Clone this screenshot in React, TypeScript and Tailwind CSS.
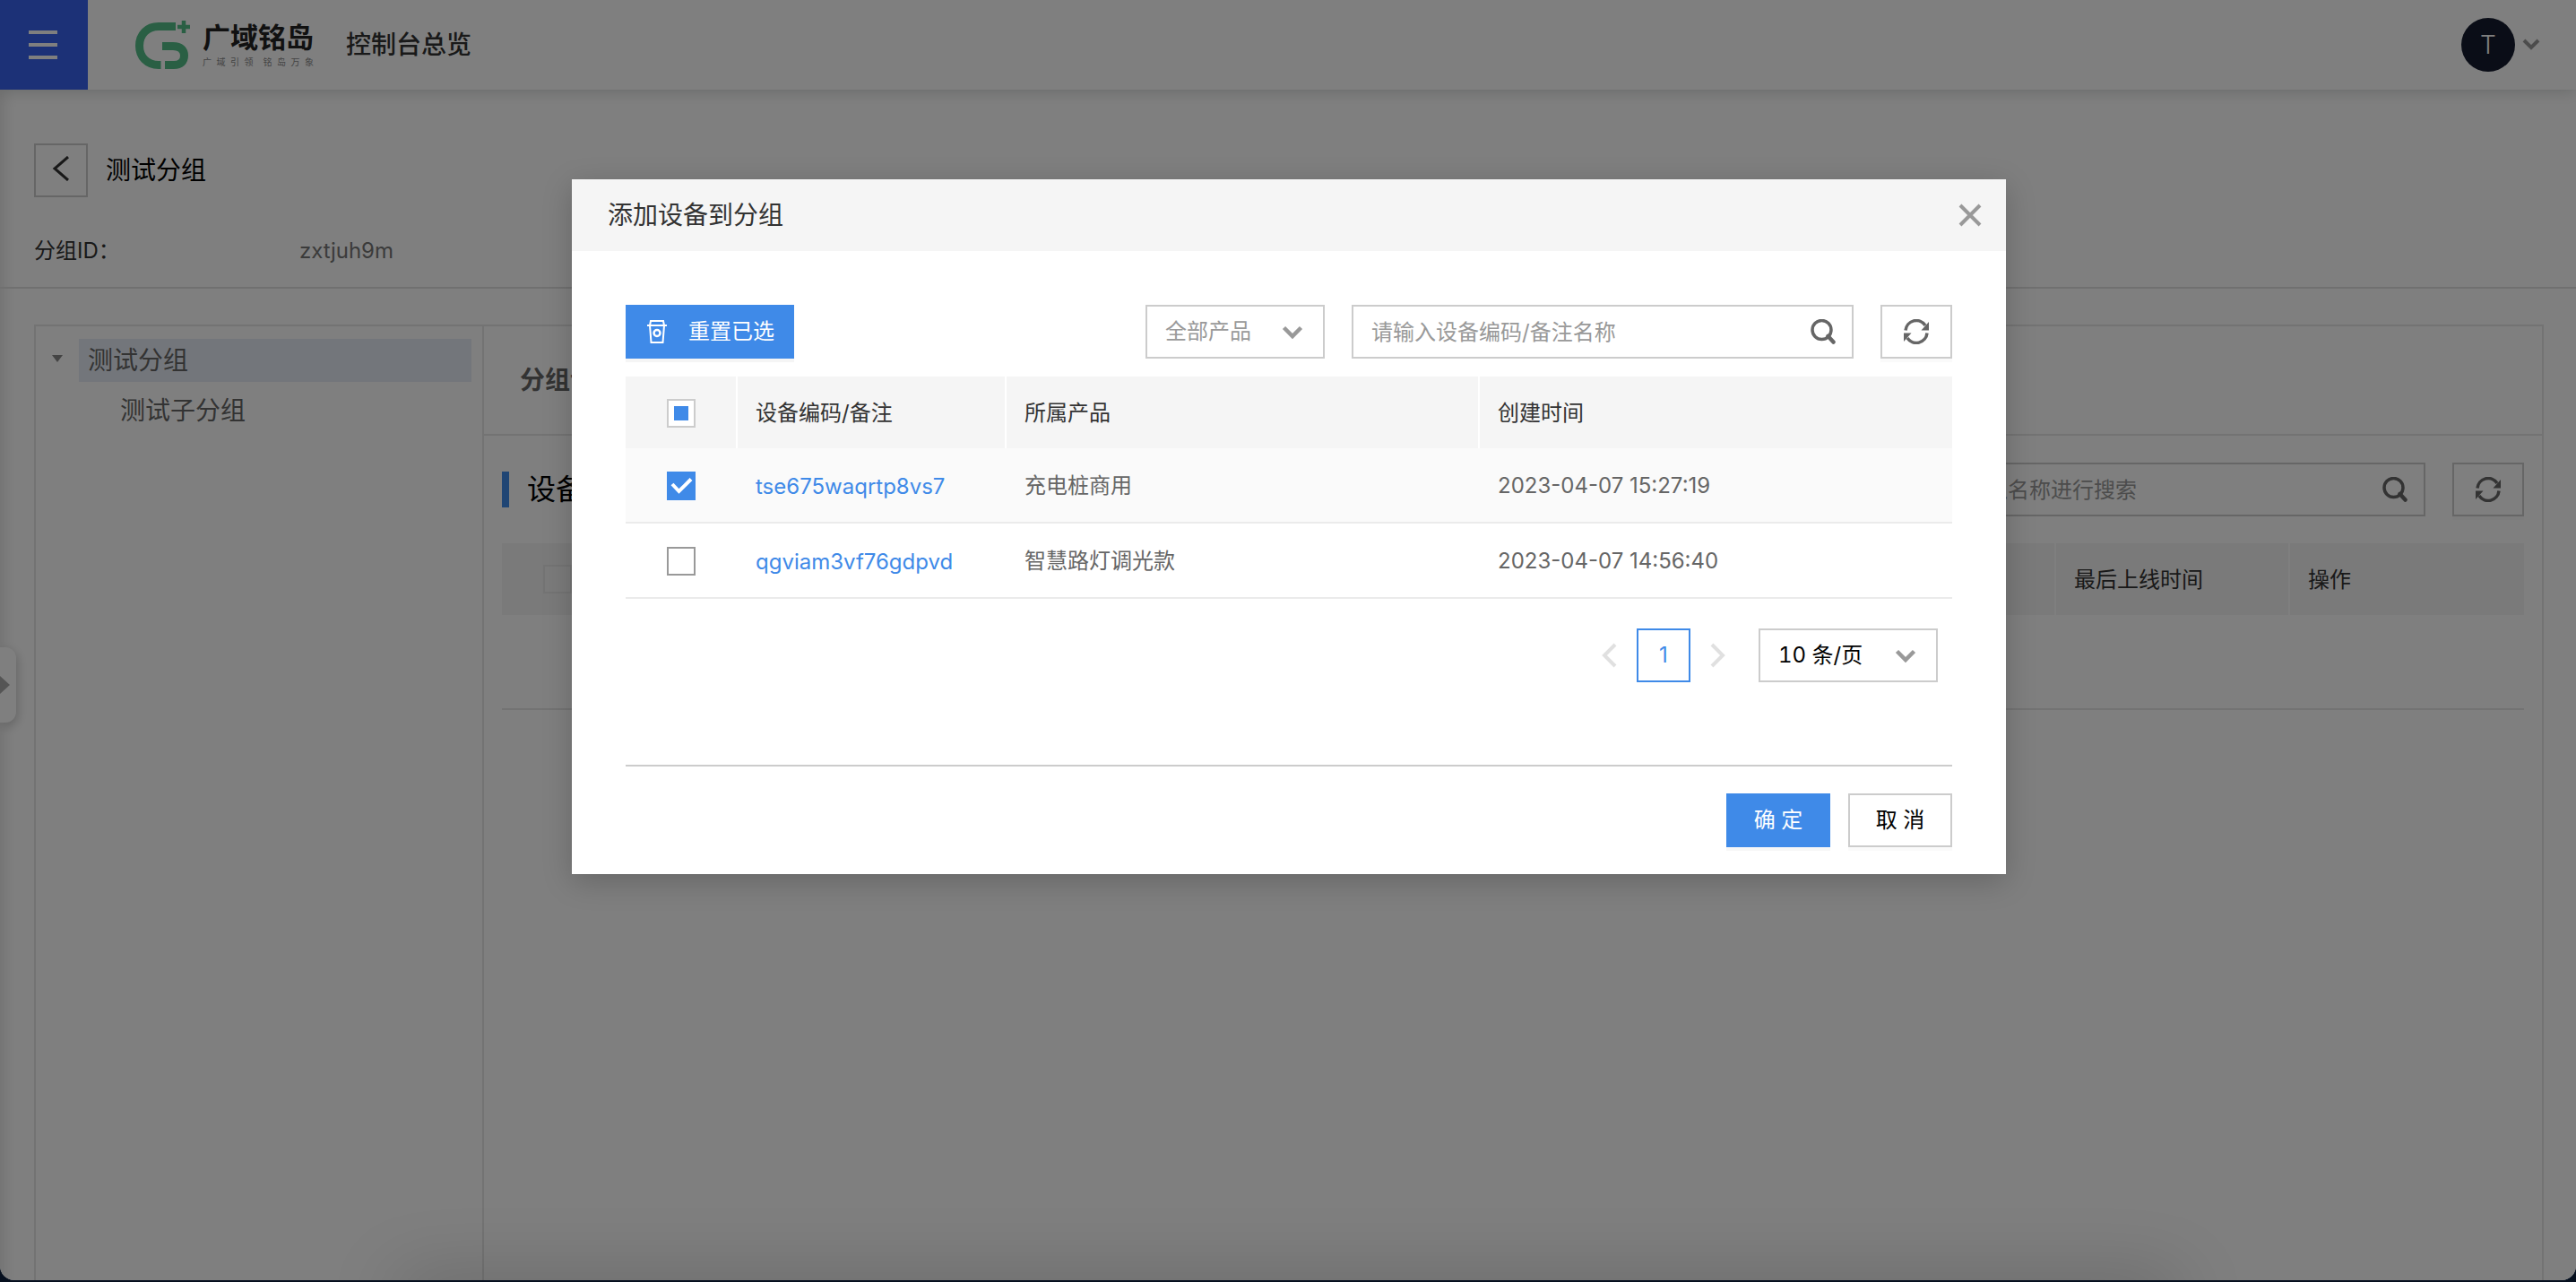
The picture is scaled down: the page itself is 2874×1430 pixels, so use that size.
import { useEffect, useRef, useState, type ReactNode } from "react";
import { clsx } from "clsx";

interface Device {
  id: string;
  product: string;
  createdAt: string;
}

const DEVICES: Device[] = [
  { id: "tse675waqrtp8vs7", product: "充电桩商用", createdAt: "2023-04-07 15:27:19" },
  { id: "qgviam3vf76gdpvd", product: "智慧路灯调光款", createdAt: "2023-04-07 14:56:40" },
];

function Logo() {
  return (
    <svg width="61" height="54" viewBox="0 0 61 54" fill="none" stroke="#55bf89" aria-hidden="true">
      <path d="M45 6.5H26C13 6.5 4.5 15.500 4.500 28S13 49.500 26 49.500h2.500" strokeWidth="9" />
      <path d="M30 28.500h12c8.500 0 12.500 4 12.500 10.500S50.500 49.500 43 49.500H33" strokeWidth="9" />
      <path d="M54 0v14M47 7h14" strokeWidth="4.500" />
    </svg>
  );
}

function SearchIcon() {
  return (
    <svg width="28" height="28" viewBox="0 0 28 28" fill="none" stroke="#666" aria-hidden="true">
      <circle cx="12.500" cy="12" r="10.500" strokeWidth="3.500" />
      <path d="m19.500 19 6 6.500" strokeWidth="4.500" strokeLinecap="round" />
    </svg>
  );
}

function RefreshIcon() {
  return (
    <svg width="28" height="28" viewBox="0 0 28 28" fill="none" aria-hidden="true">
      <path d="M2 12.500A12 12 0 0 1 24 7M26 15.500A12 12 0 0 1 4 21" stroke="#666" strokeWidth="3.500" />
      <path d="M28 3v9.500h-8.500zM0 25v-9.500h8.500z" fill="#666" />
    </svg>
  );
}

function ChevronDown({ className }: { className?: string }) {
  return (
    <svg width="24" height="16" viewBox="0 0 24 16" fill="none" stroke="#999" strokeWidth="4.500" className={className} aria-hidden="true">
      <path d="m2.500 2.500 9.500 9.500 9.500-9.500" />
    </svg>
  );
}

function ResetIcon() {
  return (
    <svg width="22" height="28" viewBox="0 0 22 28" fill="none" stroke="#fff" strokeWidth="2" aria-hidden="true">
      <path d="M0 7h22M3 7l1-5h14l1 5M3 7l1.500 19h13L19 7" />
      <circle cx="11" cy="15.500" r="3.500" strokeWidth="2.500" />
    </svg>
  );
}

function SearchBox({ label }: { label: string }) {
  return (
    <div className="flex h-[60px] w-[560px] items-center border-2 border-[#ccc] bg-white pr-[18px] pl-5">
      <input
        type="text"
        aria-label={label}
        placeholder={label}
        className="h-full min-w-0 flex-1 bg-transparent outline-none placeholder:text-[#999]"
      />
      <button type="button" aria-label="搜索">
        <SearchIcon />
      </button>
    </div>
  );
}

function RefreshButton() {
  return (
    <button
      type="button"
      aria-label="刷新"
      className="flex h-[60px] w-20 items-center justify-center border-2 border-[#ccc] bg-white shadow-[0_4px_0_rgba(0,0,0,0.02)]"
    >
      <RefreshIcon />
    </button>
  );
}

function SelectBox({ label, className, children }: { label: string; className: string; children: ReactNode }) {
  return (
    <div className="relative h-[60px] w-[200px]">
      <select
        aria-label={label}
        className={clsx("h-full w-full appearance-none border-2 border-[#ccc] bg-white px-5 tabular-nums outline-none", className)}
      >
        {children}
      </select>
      <ChevronDown className="pointer-events-none absolute top-[23px] right-6" />
    </div>
  );
}

interface CheckboxProps {
  label: string;
  checked: boolean;
  indeterminate?: boolean;
  muted?: boolean;
  onChange: () => void;
}

function Checkbox({ label, checked, indeterminate = false, muted = false, onChange }: CheckboxProps) {
  const ref = useRef<HTMLInputElement>(null);

  useEffect(() => {
    if (ref.current) ref.current.indeterminate = indeterminate;
  }, [indeterminate]);

  return (
    <span className="relative inline-block size-8 align-middle">
      <input
        ref={ref}
        type="checkbox"
        aria-label={label}
        checked={checked}
        onChange={onChange}
        className={clsx(
          "block size-8 appearance-none border-2",
          checked ? "border-[#3f8ae8] bg-[#3f8ae8]" : "bg-white",
          !checked && (indeterminate || muted ? "border-[#ccc]" : "border-[#999]"),
        )}
      />
      {indeterminate && <span className="pointer-events-none absolute inset-2 bg-[#3f8ae8]" />}
      {checked && (
        <svg viewBox="0 0 32 32" fill="none" stroke="#fff" strokeWidth="4" className="pointer-events-none absolute inset-0">
          <path d="m6 14 7.500 8L27 8.500" />
        </svg>
      )}
    </span>
  );
}

function TopBar() {
  return (
    <header className="relative z-10 flex h-[100px] items-center bg-white shadow-[0_2px_16px_rgba(0,30,20,0.18)]">
      <button type="button" aria-label="菜单" className="flex h-full w-[98px] flex-col justify-center gap-2.5 bg-[#3863ee] pl-8">
        <span className="h-1 w-8 bg-white" />
        <span className="h-1 w-8 bg-white" />
        <span className="h-1 w-8 bg-white" />
      </button>
      <div className="ml-[53px] flex items-center gap-3.5">
        <Logo />
        <div className="w-[126px]">
          <div className="text-[31px] leading-[38px] font-bold text-[#222]">广域铭岛</div>
          <div className="flex w-[124px] justify-between text-[10px] leading-4 text-[#888]">
            {Array.from("广域引领").map((c) => (
              <span key={c}>{c}</span>
            ))}
            <span />
            {Array.from("铭岛万象").map((c) => (
              <span key={c}>{c}</span>
            ))}
          </div>
        </div>
      </div>
      <a href="#" className="ml-[34px] text-[28px] leading-10 font-medium text-[#333]">
        控制台总览
      </a>
      <button type="button" aria-label="账户" className="mr-10 ml-auto flex items-center gap-2">
        <span className="flex size-[60px] items-center justify-center rounded-full bg-[#141b2e] text-[28px] font-light text-white">
          T
        </span>
        <svg width="20" height="14" viewBox="0 0 20 14" fill="none" stroke="#999" strokeWidth="4" aria-hidden="true">
          <path d="m2 2 8 8 8-8" />
        </svg>
      </button>
    </header>
  );
}

function GroupTree() {
  return (
    <aside className="w-[500px] shrink-0 border-r-2 border-[#e6e6e6] pt-3.5 pr-3 pl-[18px] text-[28px] leading-[48px] text-[#666]">
      <ul>
        <li>
          <div className="flex items-center gap-[18px]">
            <svg width="12" height="8" viewBox="0 0 12 8" fill="#888" className="mb-1" aria-hidden="true">
              <path d="M0 0h12L6 8z" />
            </svg>
            <div className="h-12 flex-1 bg-[#e6edf6] pl-2.5">测试分组</div>
          </div>
          <ul className="mt-2 pl-[76px]">
            <li>测试子分组</li>
          </ul>
        </li>
      </ul>
    </aside>
  );
}

function DevicePanel() {
  return (
    <section className="min-w-0 flex-1">
      <h2 className="h-[122px] border-b-2 border-[#e6e6e6] pl-10 text-[28px] leading-[120px] font-bold text-[#666]">
        分组设备
      </h2>
      <div className="px-5 pt-[30px]">
        <div className="flex items-center gap-[30px]">
          <h3 className="mr-auto flex items-center gap-5 text-[32px] leading-10 text-black">
            <span className="h-10 w-2 bg-[#3f8ae8]" />
            设备列表
          </h3>
          <SearchBox label="请输入名称进行搜索" />
          <RefreshButton />
        </div>
        <table className="mt-[30px] w-full table-fixed border-separate border-spacing-0 text-left">
          <thead>
            <tr className="h-20 bg-[#f4f4f4] text-[#333]">
              <th className="w-[126px] border-r-2 border-white pl-[46px]">
                <input
                  type="checkbox"
                  aria-label="全选设备"
                  disabled
                  className="block size-8 appearance-none border-2 border-[#e9e9e9] bg-[#f7f7f7]"
                />
              </th>
              <th className="border-r-2 border-white pt-0.5 pl-5 font-normal">设备编码</th>
              <th className="w-[261px] border-r-2 border-white pt-0.5 pl-5 font-normal">最后上线时间</th>
              <th className="w-[261px] pt-0.5 pl-5 font-normal">操作</th>
            </tr>
          </thead>
          <tbody>
            <tr className="h-[106px]">
              <td colSpan={4} className="border-b-2 border-[#e6e6e6]" />
            </tr>
          </tbody>
        </table>
      </div>
    </section>
  );
}

function AddDeviceDialog() {
  const [selected, setSelected] = useState<string[]>([DEVICES[0].id]);
  const all = selected.length === DEVICES.length;

  function toggle(id: string) {
    setSelected((prev) => (prev.includes(id) ? prev.filter((x) => x !== id) : [...prev, id]));
  }

  return (
    <div
      role="dialog"
      aria-modal="true"
      aria-labelledby="dialog-title"
      className="w-[1600px] max-w-full bg-white shadow-[0_8px_32px_rgba(0,0,0,0.2)]"
    >
      <div className="flex h-20 items-center justify-between bg-[#f5f5f5] pr-6 pl-10">
        <h1 id="dialog-title" className="text-[28px] leading-10 text-[#333]">
          添加设备到分组
        </h1>
        <button type="button" aria-label="关闭">
          <svg width="30" height="30" viewBox="0 0 30 30" fill="none" stroke="#999" strokeWidth="4" aria-hidden="true">
            <path d="m3 4 22 22M25 4 3 26" />
          </svg>
        </button>
      </div>

      <div className="p-[60px] pb-[30px]">
        <div className="flex gap-[30px]">
          <button
            type="button"
            onClick={() => setSelected([])}
            className="mr-auto flex h-[60px] items-center gap-6 bg-[#3f8ae8] pr-[22px] pl-6 text-white shadow-[0_4px_0_rgba(0,0,0,0.04)]"
          >
            <ResetIcon />
            重置已选
          </button>
          <SelectBox label="产品" className="text-[#999]">
            <option>全部产品</option>
          </SelectBox>
          <SearchBox label="请输入设备编码/备注名称" />
          <RefreshButton />
        </div>

        <table className="mt-5 w-full table-fixed border-separate border-spacing-0 text-left">
          <thead>
            <tr className="h-20 bg-[#f5f5f5] text-[#333]">
              <th className="w-[125px] border-r-2 border-white pl-[46px]">
                <Checkbox
                  label="全选"
                  checked={all}
                  indeterminate={selected.length > 0 && !all}
                  muted
                  onChange={() => setSelected(all ? [] : DEVICES.map((d) => d.id))}
                />
              </th>
              <th className="w-[300px] border-r-2 border-white pt-0.5 pl-5 font-normal">设备编码/备注</th>
              <th className="w-[528px] border-r-2 border-white pt-0.5 pl-5 font-normal">所属产品</th>
              <th className="pt-0.5 pl-5 font-normal">创建时间</th>
            </tr>
          </thead>
          <tbody className="text-[#666]">
            {DEVICES.map((d) => {
              const checked = selected.includes(d.id);
              return (
                <tr key={d.id} className={clsx("h-[84px] *:border-b-2 *:border-[#ebebeb]", checked && "bg-[#fafafa]")}>
                  <td className="pl-[46px]">
                    <Checkbox label={d.id} checked={checked} onChange={() => toggle(d.id)} />
                  </td>
                  <td className="pt-1 pl-5">
                    <a href="#" className="text-[#3f8ae8]">
                      {d.id}
                    </a>
                  </td>
                  <td className="pt-0.5 pl-5">{d.product}</td>
                  <td className="pt-0.5 pl-5">{d.createdAt}</td>
                </tr>
              );
            })}
          </tbody>
        </table>

        <nav aria-label="分页" className="mt-[33px] mr-4 flex items-center justify-end">
          <button type="button" aria-label="上一页" disabled>
            <svg width="18" height="28" viewBox="0 0 18 28" fill="none" stroke="#e0e0e0" strokeWidth="4" aria-hidden="true">
              <path d="M16 2 4 14l12 12" />
            </svg>
          </button>
          <button type="button" className="mx-[22px] size-[60px] border-2 border-[#3f8ae8] text-[#3f8ae8]">
            1
          </button>
          <button type="button" aria-label="下一页" disabled>
            <svg width="18" height="28" viewBox="0 0 18 28" fill="none" stroke="#e0e0e0" strokeWidth="4" aria-hidden="true">
              <path d="m2 2 12 12L2 26" />
            </svg>
          </button>
          <div className="ml-9">
            <SelectBox label="每页条数" className="text-black">
              <option>10 条/页</option>
            </SelectBox>
          </div>
        </nav>

        <div className="mt-[92px] flex justify-end gap-5 border-t-2 border-[#ccc] pt-[30px]">
          <button type="button" className="h-[60px] w-[116px] bg-[#3f8ae8] text-white shadow-[0_4px_0_rgba(0,0,0,0.03)]">
            确 定
          </button>
          <button
            type="button"
            className="h-[60px] w-[116px] border-2 border-[#ccc] bg-white text-black shadow-[0_4px_0_rgba(0,0,0,0.02)]"
          >
            取 消
          </button>
        </div>
      </div>
    </div>
  );
}

export default function App() {
  return (
    <div className="h-screen overflow-hidden bg-[#06101f] pb-0.5 font-['Inter','Noto_Sans_CJK_SC',sans-serif] text-[24px] leading-9">
      <div className="relative flex h-full flex-col overflow-hidden rounded-b-[16px] bg-white">
        <TopBar />
        <main className="flex min-h-0 flex-1 flex-col shadow-[inset_20px_0_16px_-16px_rgba(0,0,0,0.12)]">
          <div className="border-b-2 border-[#e0e0e0] px-[38px] pt-[60px] pb-[22px]">
            <div className="flex items-center gap-5">
              <button type="button" aria-label="返回" className="flex size-[60px] justify-center border-2 border-[#ccc] pt-3">
                <svg width="20" height="28" viewBox="0 0 20 28" fill="none" stroke="#333" strokeWidth="3" aria-hidden="true">
                  <path d="M18 1 3 14l15 13" />
                </svg>
              </button>
              <span className="text-[28px] leading-10 text-black">测试分组</span>
            </div>
            <dl className="mt-[42px] flex">
              <dt className="w-[296px] text-[#333]">分组ID：</dt>
              <dd className="text-[#777]">zxtjuh9m</dd>
            </dl>
          </div>
          <div className="mt-10 mr-9 ml-[38px] flex min-h-0 flex-1 overflow-hidden border-2 border-b-0 border-[#e6e6e6]">
            <GroupTree />
            <DevicePanel />
          </div>
        </main>

        {/* collapsed side menu handle */}
        <button
          type="button"
          aria-label="展开"
          className="absolute top-[722px] left-0 flex h-[84px] w-[18px] items-center rounded-r-[12px] bg-white shadow-[2px_4px_12px_rgba(0,0,0,0.2)]"
        >
          <svg width="11" height="20" viewBox="0 0 11 20" fill="#aaa" aria-hidden="true">
            <path d="M0 0v20l11-10z" />
          </svg>
        </button>

        <div className="absolute inset-0 z-20 flex items-start justify-center overflow-hidden bg-black/50 pt-[200px] pl-0.5">
          <AddDeviceDialog />
          <div className="pointer-events-none absolute inset-x-[440px] -bottom-10 h-10 rounded-[24px] shadow-[0_0_80px_rgba(0,0,0,0.24)]" />
        </div>
      </div>
    </div>
  );
}
